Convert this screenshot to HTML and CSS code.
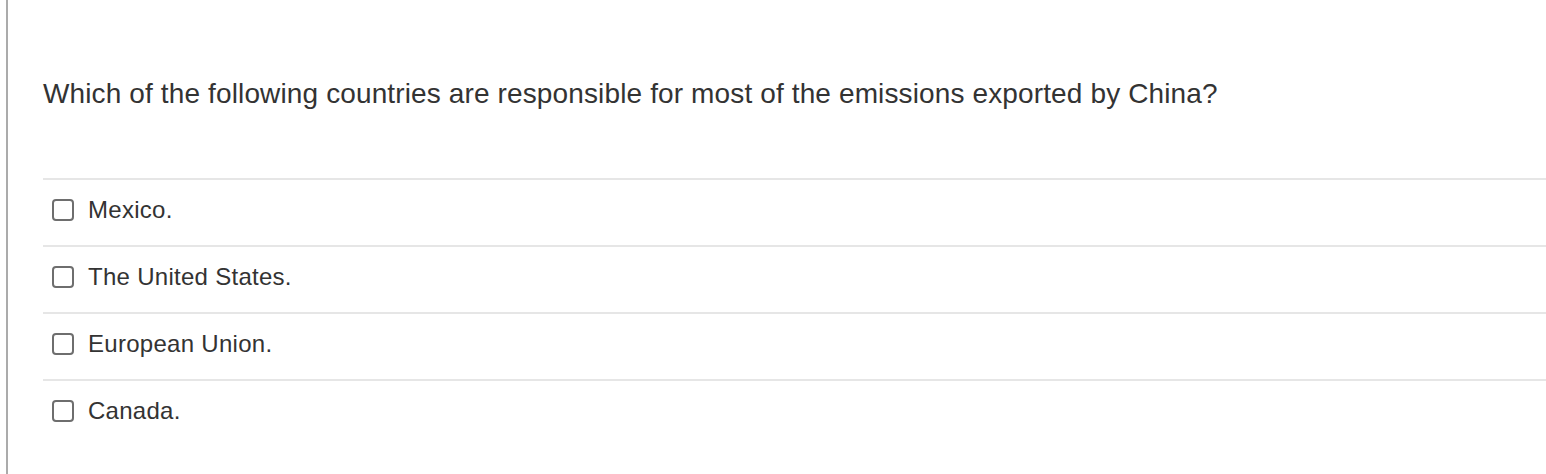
FILE: index.html
```html
<!DOCTYPE html>
<html lang="en">
<head>
<meta charset="utf-8">
<title>Question</title>
<link rel="stylesheet" href="styles.css">
</head>
<body>
<div class="panel">
  <p class="question">Which of the following countries are responsible for most of the emissions exported by China?</p>
  <ul class="options">
    <li class="option"><span class="box"></span><span class="label">Mexico.</span></li>
    <li class="option"><span class="box"></span><span class="label">The United States.</span></li>
    <li class="option"><span class="box"></span><span class="label">European Union.</span></li>
    <li class="option"><span class="box"></span><span class="label">Canada.</span></li>
  </ul>
</div>
</body>
</html>
```

FILE: styles.css
```css
html, body {
  margin: 0;
  padding: 0;
  background: #ffffff;
}
body {
  font-family: "Liberation Sans", Arial, sans-serif;
  color: #333333;
}
.panel {
  margin-left: 6px;
  border-left: 2px solid #ababab;
  padding-left: 35px;
  padding-top: 78px;
  min-height: 474px;
  box-sizing: border-box;
}
.question {
  margin: 0 0 68px 0;
  font-size: 28px;
  line-height: 32px;
  letter-spacing: 0.13px;
  color: #333333;
}
.options {
  list-style: none;
  margin: 0;
  padding: 0;
}
.option {
  display: flex;
  align-items: center;
  border-top: 2px solid #e6e6e6;
  padding: 14px 0 19px 9px;
  box-sizing: content-box;
  height: 32px;
}
.box {
  width: 18px;
  height: 18px;
  border: 2px solid #6e6e6e;
  border-radius: 4px;
  flex: none;
}
.label {
  margin-left: 14px;
  font-size: 24px;
  line-height: 28px;
  letter-spacing: 0.28px;
  color: #333333;
}
```
